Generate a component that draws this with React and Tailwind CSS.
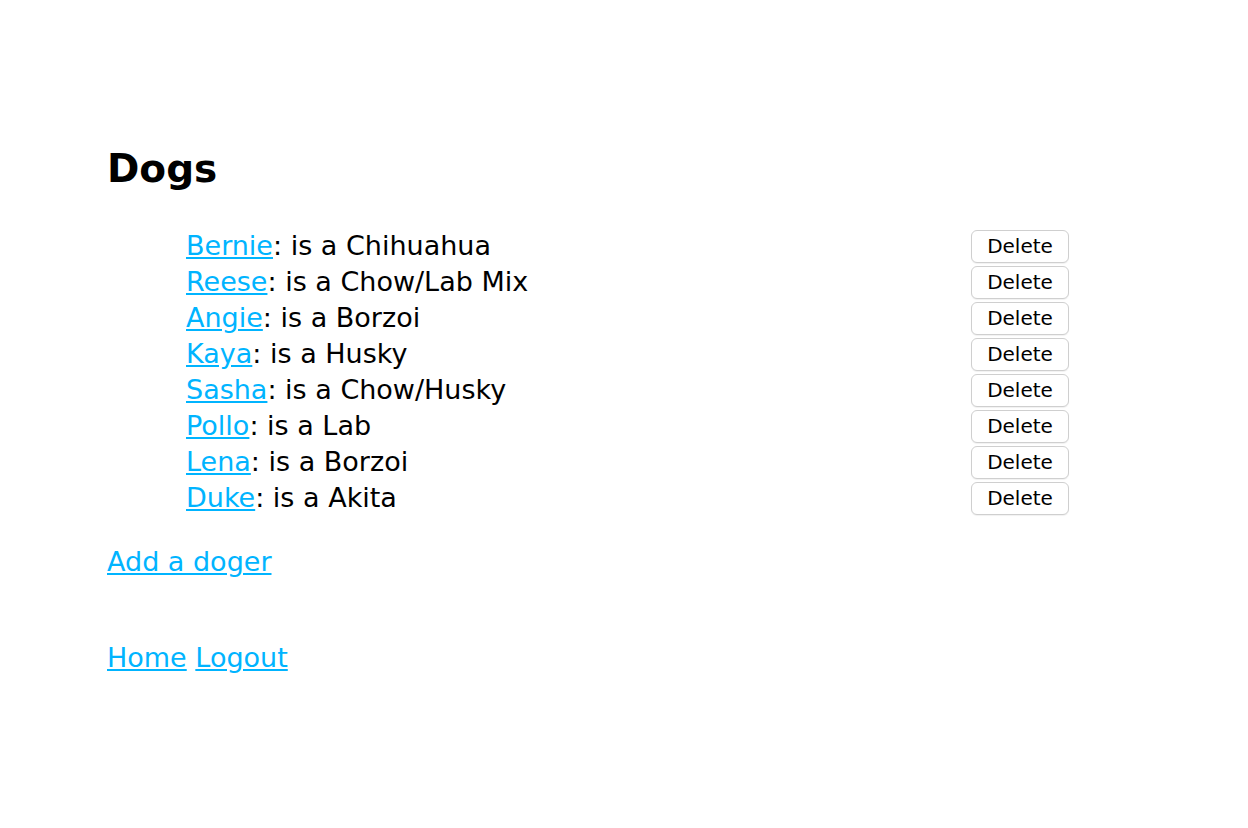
import React from "react";

const dogs = [
  { name: "Bernie", breed: "Chihuahua" },
  { name: "Reese", breed: "Chow/Lab Mix" },
  { name: "Angie", breed: "Borzoi" },
  { name: "Kaya", breed: "Husky" },
  { name: "Sasha", breed: "Chow/Husky" },
  { name: "Pollo", breed: "Lab" },
  { name: "Lena", breed: "Borzoi" },
  { name: "Duke", breed: "Akita" },
];

const App = () => {
  return (
    <div className="min-h-screen bg-white text-black font-['DejaVu_Sans',sans-serif] pt-[142px] pl-[107px]">
      <h1 className="text-[39px] font-bold leading-[54px]">Dogs</h1>
      <ul className="mt-[32px] pl-[79px] w-[962px]">
        {dogs.map((dog) => (
          <li key={dog.name} className="flex items-center justify-between h-[36px] text-[27px]">
            <span>
              <a href="#" className="text-[#00b4ff] underline">
                {dog.name}
              </a>
              : is a {dog.breed}
            </span>
            <button className="w-[98px] h-[33px] border border-[#cfcfcf] rounded-[6px] bg-white text-[20px] shadow-[0_1px_1px_rgba(0,0,0,0.06)]">
              Delete
            </button>
          </li>
        ))}
      </ul>
      <div className="mt-[28px] text-[27px] leading-[36px]">
        <a href="#" className="text-[#00b4ff] underline">
          Add a doger
        </a>
      </div>
      <div className="mt-[60px] text-[27px] leading-[36px]">
        <a href="#" className="text-[#00b4ff] underline">
          Home
        </a>{" "}
        <a href="#" className="text-[#00b4ff] underline">
          Logout
        </a>
      </div>
    </div>
  );
};

export default App;
